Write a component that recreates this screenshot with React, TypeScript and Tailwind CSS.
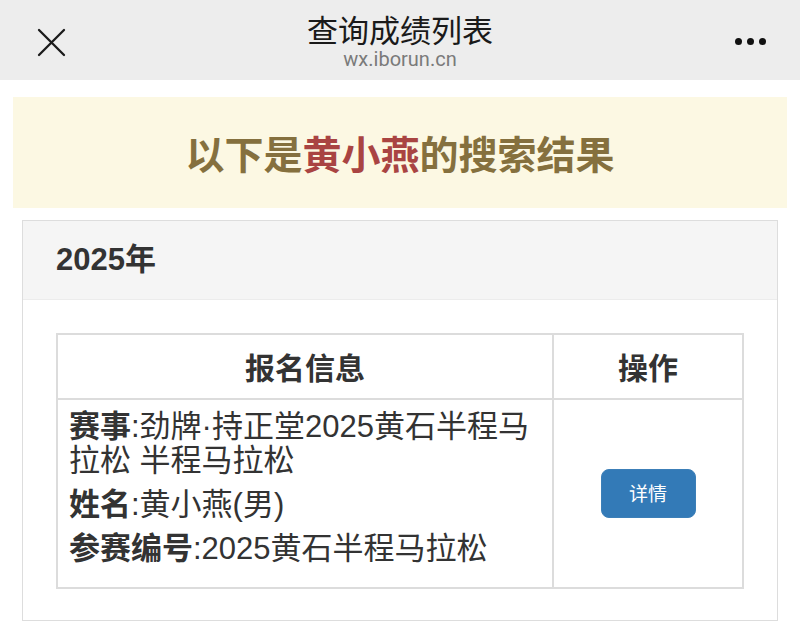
const cjk = "font-['Noto_Sans_CJK_SC','Noto_Sans',sans-serif]";
const mixed = "font-['Liberation_Sans','Noto_Sans_CJK_SC',sans-serif]";

const TopBar = () => (
  <div className="relative flex h-[80px] flex-col items-center justify-center bg-[#ededed]">
    <svg
      className="absolute left-[37px] top-[28px]"
      width="29"
      height="29"
      viewBox="0 0 29 29"
      fill="none"
      stroke="#1a1a1a"
      strokeWidth="2.3"
      strokeLinecap="round"
    >
      <path d="M2 2 L27 27 M27 2 L2 27" />
    </svg>
    <div className="absolute right-[34px] top-[38px] flex gap-[5px]">
      <span className="h-[7px] w-[7px] rounded-full bg-[#111]" />
      <span className="h-[7px] w-[7px] rounded-full bg-[#111]" />
      <span className="h-[7px] w-[7px] rounded-full bg-[#111]" />
    </div>
    <h1 className={`${cjk} mt-[1px] text-[31px] leading-[31px] text-[#1a1a1a]`}>
      查询成绩列表
    </h1>
    <p className="mt-[5px] font-['Roboto',sans-serif] text-[20px] leading-[20px] text-[#7a7a7a]">
      wx.iborun.cn
    </p>
  </div>
);

const Label = ({ children }: { children: React.ReactNode }) => (
  <span className="font-bold">{children}</span>
);

const App = () => {
  return (
    <div className={`${cjk} min-h-[636px] w-[800px] bg-white`}>
      <TopBar />
      <div className="px-[13px] pt-[17px]">
        <div className="flex h-[111px] items-center justify-center bg-[#fcf8e3]">
          <h2 className="text-[39px] font-bold text-[#85703e]">
            以下是<span className="text-[#a94442]">黄小燕</span>的搜索结果
          </h2>
        </div>
      </div>
      <div className="mx-[22px] mt-[12px] border border-[#dddddd]">
        <div className="flex h-[79px] items-center border-b border-[#ececec] bg-[#f5f5f5] px-[33px]">
          <span className={`${mixed} text-[31px] font-bold text-[#333]`}>2025年</span>
        </div>
        <div className="px-[33px] pt-[33px] pb-[31px]">
          <table className="w-full border-collapse text-[#333]">
            <thead>
              <tr className="h-[65px]">
                <th className="w-[496px] border-2 border-[#dcdcdc] text-[30px] font-bold">
                  报名信息
                </th>
                <th className="border-2 border-[#dcdcdc] text-[30px] font-bold">
                  操作
                </th>
              </tr>
            </thead>
            <tbody>
              <tr>
                <td className={`${mixed} border-2 border-[#dcdcdc] pl-[11px] pr-[14px] pt-[10px] pb-[11px] text-[31px] leading-[34px]`}>
                  <p className="mb-[10px]">
                    <Label>赛事</Label>:劲牌·持正堂2025黄石半程马拉松 半程马拉松
                  </p>
                  <p className="mb-[10px]">
                    <Label>姓名</Label>:黄小燕(男)
                  </p>
                  <p className="mb-[10px]">
                    <Label>参赛编号</Label>:2025黄石半程马拉松
                  </p>
                </td>
                <td className="border-2 border-[#dcdcdc] text-center align-middle">
                  <button className="h-[49px] w-[95px] rounded-[8px] border border-[#3c7fb8] bg-[#337ab7] text-[19px] text-white">
                    详情
                  </button>
                </td>
              </tr>
            </tbody>
          </table>
        </div>
      </div>
    </div>
  );
};

export default App;
